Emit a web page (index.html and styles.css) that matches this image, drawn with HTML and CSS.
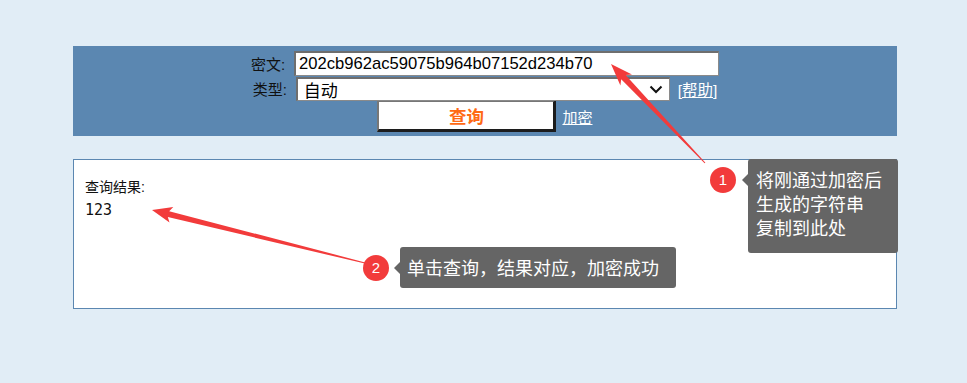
FILE: index.html
```html
<!DOCTYPE html>
<html lang="zh-CN">
<head>
    <meta charset="UTF-8">
    <title>MD5 解密</title>
    <link rel="stylesheet" href="styles.css">
</head>
<body>

<div class="page">
    <form class="query-bar">
        <div class="row">
            <label class="field-label" for="hash">密文:</label>
            <input class="hash-input" id="hash" type="text" value="202cb962ac59075b964b07152d234b70">
        </div>
        <div class="row">
            <label class="field-label" for="type">类型:</label>
            <div class="select-wrap">
                <select class="type-select" id="type">
                    <option>自动</option>
                </select>
                <svg class="chevron" width="14" height="9" viewBox="0 0 14 9"><path d="M1.5 1.5 L7 7 L12.5 1.5" fill="none" stroke="#111" stroke-width="2"/></svg>
            </div>
            <a class="help-link" href="#">[<u>帮助</u>]</a>
        </div>
        <div class="row row-actions">
            <button class="query-btn" type="button">查询</button>
            <a class="encrypt-link" href="#">加密</a>
        </div>
    </form>

    <div class="result-box">
        <div class="result-label">查询结果:</div>
        <div class="result-value">123</div>
    </div>
</div>

<!-- annotations -->
<svg class="arrows" width="967" height="383" viewBox="0 0 967 383">
    <polygon points="611,64 632,74.5 625.6,75 705.4,162.7 704.6,163.3 621.2,79.2 620.4,85.5" fill="#f23b3b"/>
    <polygon points="152,210 173.3,207 169.2,211.2 365.1,262.4 364.9,263.6 167.8,217 169.5,222.6" fill="#f23b3b"/>
</svg>

<div class="badge badge-1">1</div>
<div class="tip tip-1">将刚通过加密后<br>生成的字符串<br>复制到此处</div>

<div class="badge badge-2">2</div>
<div class="tip tip-2">单击查询，结果对应，加密成功</div>

</body>
</html>
```

FILE: styles.css
```css
body {
    margin: 0;
    background-color: #e1edf6;
    font-family: "Liberation Sans", "Noto Sans CJK SC", sans-serif;
    color: #111;
    width: 967px;
    height: 383px;
    position: relative;
    overflow: hidden;
}
.page {
    width: 824px;
    margin: 46px 0 0 73px;
}
.query-bar {
    background-color: #5b87b1;
    margin: 0;
    padding: 5px 0 4px;
    height: 81px;
    display: flex;
    flex-direction: column;
    align-items: center;
}
.row {
    display: flex;
    align-items: center;
}
.field-label {
    font-size: 15px;
    width: 38px;
    margin-right: 5px;
    text-align: left;
    color: #111;
}
.hash-input {
    box-sizing: border-box;
    width: 425px;
    height: 25px;
    margin: 0;
    padding: 0 3px;
    border: 1px solid #8a8a8a;
    border-top: 2px solid #6e6e6e;
    border-left: 2px solid #6e6e6e;
    font-family: "Liberation Sans", sans-serif;
    font-size: 16.6px;
    color: #000;
    background: #fff;
}
.select-wrap {
    position: relative;
    margin-top: 1px;
}
.type-select {
    appearance: none;
    box-sizing: border-box;
    width: 374px;
    height: 24px;
    margin: 0;
    padding: 0 0 0 6px;
    border: 1px solid #8a8a8a;
    border-top: 2px solid #6e6e6e;
    border-left: 2px solid #6e6e6e;
    border-radius: 0;
    background: #fff;
    font-family: "Noto Sans CJK SC", sans-serif;
    font-size: 17px;
    line-height: 20px;
    color: #000;
}
.chevron {
    position: absolute;
    right: 7px;
    top: 8px;
}
.help-link {
    color: #fff;
    font-size: 15.5px;
    margin-left: 8px;
    text-decoration: none;
}
.row-actions {
    align-items: baseline;
    margin-top: -1px;
}
.query-btn {
    box-sizing: border-box;
    width: 179px;
    height: 32px;
    background: #fff;
    border-style: solid;
    border-width: 2px 3px 3px 2px;
    border-color: #777 #1c1c1c #1c1c1c #777;
    color: #ff6a14;
    font-family: "Noto Sans CJK SC", sans-serif;
    font-weight: bold;
    font-size: 17.5px;
    padding: 0;
    line-height: 26px;
}
.encrypt-link {
    color: #fff;
    font-size: 15px;
    margin-left: 6px;
}
.result-box {
    box-sizing: border-box;
    margin-top: 23px;
    height: 150px;
    background: #fff;
    border: 1px solid #5b87b1;
    padding: 16px 0 0 11px;
}
.result-label {
    font-size: 14px;
    line-height: 22px;
}
.result-value {
    font-family: "DejaVu Sans Mono", monospace;
    font-size: 15px;
    line-height: 24px;
}
.arrows {
    position: absolute;
    left: 0;
    top: 0;
    pointer-events: none;
}
.badge {
    position: absolute;
    width: 26px;
    height: 26px;
    border-radius: 50%;
    background: #f23b3b;
    color: #fff;
    font-size: 15px;
    line-height: 26px;
    text-align: center;
}
.badge-1 { left: 710px; top: 167px; }
.badge-2 { left: 363px; top: 255px; }
.tip {
    position: absolute;
    background: #656565;
    color: #fff;
    font-family: "Noto Sans CJK SC", sans-serif;
    font-size: 18px;
    line-height: 24px;
    border-radius: 3px;
}
.tip::before {
    content: "";
    position: absolute;
    left: -6px;
    border: 6px solid transparent;
    border-left: 0;
    border-right-color: #656565;
}
.tip-1 {
    left: 748px;
    top: 159px;
    width: 142px;
    height: 82px;
    padding: 8px 0 4px 8px;
}
.tip-1::before { top: 15px; }
.tip-2 {
    left: 400px;
    top: 247px;
    width: 269px;
    height: 41px;
    padding: 0 0 0 7px;
    line-height: 41px;
}
.tip-2::before { top: 15px; }
```
